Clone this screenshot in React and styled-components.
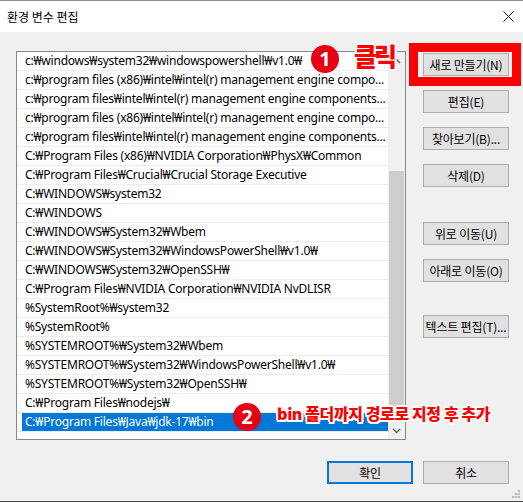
import React from 'react'
import styled, { createGlobalStyle } from 'styled-components'

const GlobalStyle = createGlobalStyle`
  html, body {
    margin: 0;
    padding: 0;
    background: #f0f0f0;
  }
  * {
    box-sizing: border-box;
  }
`

const UI_FONT = `'Noto Sans', 'Noto Sans CJK KR', sans-serif`

const Window = styled.div`
  position: relative;
  width: 523px;
  height: 502px;
  display: flex;
  flex-direction: column;
  background: #f0f0f0;
  border-top: 1px solid #8c8c8c;
  border-bottom: 1px solid #4a4a4a;
  font-family: ${UI_FONT};
  font-size: 12px;
  color: #000;
  overflow: hidden;
`

const TitleBar = styled.div`
  height: 31px;
  flex: none;
  display: flex;
  align-items: center;
  justify-content: space-between;
  background: #ffffff;
  padding-left: 7px;
`

const Title = styled.div`
  font-family: 'Noto Sans CJK KR', sans-serif;
  font-size: 12px;
  line-height: 1;
`

const CloseButton = styled.div`
  width: 30px;
  height: 31px;
  display: flex;
  align-items: center;
  justify-content: center;
`

const Body = styled.div`
  flex: 1;
  display: flex;
  flex-direction: column;
  padding: 19px 14px 0 16px;
`

const Main = styled.div`
  display: flex;
  align-items: flex-start;
`

const ListBox = styled.div`
  width: 390px;
  height: 389px;
  display: flex;
  background: #ffffff;
  border: 1px solid #828790;
`

const Rows = styled.div`
  flex: 1;
  min-width: 0;
`

const Row = styled.div`
  height: 19px;
  display: flex;
  border-bottom: 1px solid #ededed;
`

const RowLabel = styled.div`
  flex: 1;
  min-width: 0;
  margin-left: 5px;
  padding: 0 1px 0 3px;
  line-height: 18px;
  letter-spacing: -0.22px;
  white-space: nowrap;
  overflow: hidden;
  background: ${p => (p.$selected ? '#0078d7' : 'transparent')};
  color: ${p => (p.$selected ? '#ffffff' : '#000000')};
`

const ScrollBar = styled.div`
  width: 17px;
  flex: none;
  display: flex;
  flex-direction: column;
  background: #f0f0f0;
`

const ScrollArrow = styled.div`
  height: 17px;
  flex: none;
  display: flex;
  align-items: center;
  justify-content: center;
`

const ScrollTrack = styled.div`
  flex: 1;
  display: flex;
  flex-direction: column;
  padding: 102px 1px 1px 1px;
`

const ScrollThumb = styled.div`
  flex: 1;
  background: #cdcdcd;
`

const SideButtons = styled.div`
  display: flex;
  flex-direction: column;
  margin-left: 17px;
  padding-top: 2px;
`

const Button = styled.div`
  width: 86px;
  height: 23px;
  margin-top: ${p => p.$gap || 0}px;
  display: flex;
  align-items: center;
  justify-content: center;
  background: #e1e1e1;
  border: ${p => (p.$default ? '2px solid #0078d7' : '1px solid #adadad')};
  font-family: 'Noto Sans CJK KR', sans-serif;
  font-size: 12px;
  white-space: nowrap;
  letter-spacing: -0.2px;
`

const Footer = styled.div`
  display: flex;
  justify-content: flex-end;
  gap: 10px;
  margin-top: 21px;
`

const HighlightFrame = styled.div`
  position: absolute;
  left: 409px;
  top: 42px;
  width: 112px;
  height: 43px;
  border: 9px solid #ff0000;
  pointer-events: none;
`

const StepBadge = styled.div`
  position: absolute;
  left: ${p => p.$x}px;
  top: ${p => p.$y}px;
  width: 28px;
  height: 28px;
  border-radius: 50%;
  background: #e50012;
  color: #ffffff;
  display: flex;
  align-items: center;
  justify-content: center;
  font-family: 'Noto Sans', sans-serif;
  font-weight: 700;
  font-size: 20px;
  line-height: 1;
`

const Note = styled.div`
  position: absolute;
  left: ${p => p.$x}px;
  top: ${p => p.$y}px;
  font-family: 'Noto Sans CJK KR', sans-serif;
  font-weight: 900;
  font-size: ${p => p.$size}px;
  letter-spacing: ${p => p.$spacing || 0}px;
  line-height: 1;
  color: #ff0000;
  white-space: nowrap;
  text-shadow:
    -1.5px -1.5px 0 #fff, 1.5px -1.5px 0 #fff, -1.5px 1.5px 0 #fff, 1.5px 1.5px 0 #fff,
    0 -2px 0 #fff, 0 2px 0 #fff, -2px 0 0 #fff, 2px 0 0 #fff;
`

const Grip = styled.svg`
  position: absolute;
  right: 3px;
  bottom: 3px;
`

const paths = [
  'c:₩windows₩system32₩windowspowershell₩v1.0₩',
  'c:₩program files (x86)₩intel₩intel(r) management engine compo...',
  'c:₩program files₩intel₩intel(r) management engine components...',
  'c:₩program files (x86)₩intel₩intel(r) management engine compo...',
  'c:₩program files₩intel₩intel(r) management engine components...',
  'C:₩Program Files (x86)₩NVIDIA Corporation₩PhysX₩Common',
  'C:₩Program Files₩Crucial₩Crucial Storage Executive',
  'C:₩WINDOWS₩system32',
  'C:₩WINDOWS',
  'C:₩WINDOWS₩System32₩Wbem',
  'C:₩WINDOWS₩System32₩WindowsPowerShell₩v1.0₩',
  'C:₩WINDOWS₩System32₩OpenSSH₩',
  'C:₩Program Files₩NVIDIA Corporation₩NVIDIA NvDLISR',
  '%SystemRoot%₩system32',
  '%SystemRoot%',
  '%SYSTEMROOT%₩System32₩Wbem',
  '%SYSTEMROOT%₩System32₩WindowsPowerShell₩v1.0₩',
  '%SYSTEMROOT%₩System32₩OpenSSH₩',
  'C:₩Program Files₩nodejs₩',
  'C:₩Program Files₩Java₩jdk-17₩bin',
]

const sideButtons = [
  { label: '새로 만들기(N)', gap: 0 },
  { label: '편집(E)', gap: 14 },
  { label: '찾아보기(B)...', gap: 14 },
  { label: '삭제(D)', gap: 14 },
  { label: '위로 이동(U)', gap: 35 },
  { label: '아래로 이동(O)', gap: 14 },
  { label: '텍스트 편집(T)...', gap: 33 },
]

const Chevron = ({ up }) => (
  <svg width="9" height="6" viewBox="0 0 9 6">
    <path
      d={up ? 'M1 5 L4.5 1.5 L8 5' : 'M1 1 L4.5 4.5 L8 1'}
      fill="none"
      stroke="#606060"
      strokeWidth="1.3"
    />
  </svg>
)

export default function App() {
  return (
    <>
      <GlobalStyle />
      <Window>
        <TitleBar>
          <Title>환경 변수 편집</Title>
          <CloseButton>
            <svg width="11" height="11" viewBox="0 0 11 11">
              <path d="M0.5 0.5 L10.5 10.5 M10.5 0.5 L0.5 10.5" stroke="#111" strokeWidth="1" />
            </svg>
          </CloseButton>
        </TitleBar>
        <Body>
          <Main>
            <ListBox>
              <Rows>
                {paths.map((p, i) => (
                  <Row key={i}>
                    <RowLabel $selected={i === paths.length - 1}>{p}</RowLabel>
                  </Row>
                ))}
              </Rows>
              <ScrollBar>
                <ScrollArrow>
                  <Chevron up />
                </ScrollArrow>
                <ScrollTrack>
                  <ScrollThumb />
                </ScrollTrack>
                <ScrollArrow>
                  <Chevron />
                </ScrollArrow>
              </ScrollBar>
            </ListBox>
            <SideButtons>
              {sideButtons.map(b => (
                <Button key={b.label} $gap={b.gap}>
                  {b.label}
                </Button>
              ))}
            </SideButtons>
          </Main>
          <Footer>
            <Button $default>확인</Button>
            <Button>취소</Button>
          </Footer>
        </Body>

        <HighlightFrame />
        <StepBadge $x={311} $y={44}>1</StepBadge>
        <Note $x={354} $y={42} $size={25} $spacing={-3}>클릭</Note>
        <StepBadge $x={233} $y={402}>2</StepBadge>
        <Note $x={277} $y={404} $size={16} $spacing={-0.4}>bin 폴더까지 경로로 지정 후 추가</Note>

        <Grip width="8" height="8" viewBox="0 0 8 8">
          {[[6, 0], [3, 3], [6, 3], [0, 6], [3, 6], [6, 6]].map(([x, y]) => (
            <rect key={`${x}-${y}`} x={x} y={y} width="2" height="2" fill="#b8b8b8" />
          ))}
        </Grip>
      </Window>
    </>
  )
}
